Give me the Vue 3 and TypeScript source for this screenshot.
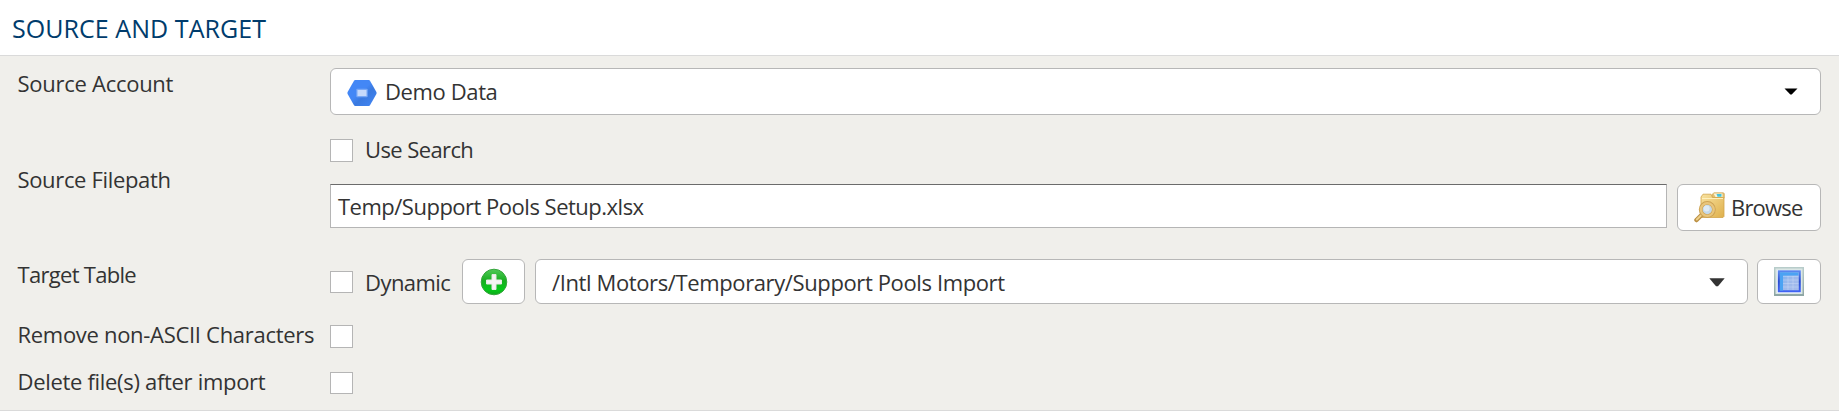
<script setup lang="ts">
import { ref } from 'vue'

const account = ref('Demo Data')
const filepath = ref('Temp/Support Pools Setup.xlsx')
const table = ref('/Intl Motors/Temporary/Support Pools Import')
const useSearch = ref(false)
const dynamic = ref(false)
const removeNonAscii = ref(false)
const deleteAfter = ref(false)
</script>

<template>
  <section class="panel">
    <header class="panel-header"><h2 class="title">SOURCE AND TARGET</h2></header>
    <div class="body">
      <div class="row row-account">
        <div class="label"><span class="t-account">Source Account</span></div>
        <div class="box select account">
          <svg class="hex" width="30" height="28" viewBox="0 0 30 28">
            <defs>
              <linearGradient id="hexShade" x1="0" y1="0" x2="1" y2="1">
                <stop offset="0.45" stop-color="#4387f6" /><stop offset="0.6" stop-color="#3a79df" /><stop offset="1" stop-color="#4387f6" />
              </linearGradient>
            </defs>
            <path d="M8.2 1h13.6q.8 0 1.2.7l6.4 11.4q.5.9 0 1.8L23 26.300q-.4.7-1.200.7H8.200q-.8 0-1.200-.7L.6 14.900q-.5-.9 0-1.800L7 1.700Q7.400 1 8.200 1z" fill="url(#hexShade)" />
            <rect x="9.300" y="9.700" width="11.400" height="8.600" rx="1" fill="#79a8f6" />
            <rect x="10.500" y="11" width="9" height="6" fill="#c6d9fb" />
          </svg>
          <span class="t-demo">{{ account }}</span>
          <svg class="arrow" width="14" height="8" viewBox="0 0 14 8"><path d="M.5.500h13L7.700 6.500H6.300z" fill="#000" /></svg>
        </div>
      </div>

      <div class="row row-file">
        <div class="label"><span class="t-filepath">Source Filepath</span></div>
        <div class="field">
          <div class="line search">
            <button class="check" role="checkbox" :aria-checked="useSearch" @click="useSearch = !useSearch"></button>
            <span class="t-search">Use Search</span>
          </div>
          <div class="line file">
            <div class="input"><span class="t-path">{{ filepath }}</span></div>
            <button class="box browse">
              <svg width="31" height="31" viewBox="0 0 31 31">
                <defs>
                  <linearGradient id="folder" x1="0" y1="0" x2="1" y2="1">
                    <stop offset="0" stop-color="#f8e2a0" /><stop offset="1" stop-color="#dfb04b" />
                  </linearGradient>
                </defs>
                <path d="M18 4V2.500L20 .8h9.500l.8 1V6H18z" fill="#e3c071" stroke="#cda553" stroke-width=".7" />
                <path d="M7 7.500V5L9 2.200h8L18.500 5.500H28l2 .5v18.500L29 25.500H7z" fill="url(#folder)" stroke="#d2a44b" stroke-width=".8" />
                <path d="M19.500 1.500h9v3.500h-7z" fill="#faf3d9" /><path d="M22.500 2h5v2.800h-4z" fill="#43c4df" />
                <path d="M8 6.500h21" stroke="#fff0be" stroke-width="1" />
                <path d="M8.500 22 2.500 28" stroke="#bb8f42" stroke-width="4.500" stroke-linecap="round" />
                <path d="M8.500 22 2.800 27.500" stroke="#edcf88" stroke-width="2" stroke-linecap="round" />
                <circle cx="13.300" cy="17.500" r="6.600" fill="#c4d9e9" stroke="#cda354" stroke-width="3.800" />
                <circle cx="13.300" cy="17.500" r="6.400" fill="none" stroke="#e9c67c" stroke-width="2.300" />
                <circle cx="12.600" cy="16.500" r="3" fill="#dfebf5" />
              </svg>
              <span class="t-browse">Browse</span>
            </button>
          </div>
        </div>
      </div>

      <div class="row row-table">
        <div class="label"><span class="t-target">Target Table</span></div>
        <div class="line target">
          <button class="check short" role="checkbox" :aria-checked="dynamic" @click="dynamic = !dynamic"></button>
          <span class="dynamic"><span class="t-dynamic">Dynamic</span></span>
          <button class="box add" aria-label="Add">
            <svg width="28" height="28" viewBox="0 0 28 28">
              <defs>
                <linearGradient id="green" x1="0" y1="0" x2="0" y2="1">
                  <stop offset="0" stop-color="#50c957" /><stop offset="0.45" stop-color="#17ae20" /><stop offset="0.8" stop-color="#06c919" /><stop offset="1" stop-color="#0da91a" />
                </linearGradient>
              </defs>
              <circle cx="14" cy="14" r="12.800" fill="url(#green)" stroke="#36a53d" stroke-width="1" />
              <path d="M12 6.500h4V12h5.500v4H16v5.500h-4V16H6.500v-4H12z" fill="#f4f4f2" stroke="#e6e9e4" stroke-width="1" />
            </svg>
          </button>
          <div class="box select table">
            <span class="t-table">{{ table }}</span>
            <svg class="arrow-table" width="16" height="9" viewBox="0 0 16 9"><path d="M.3.300h15.400L9 8.300H7z" fill="#333" /></svg>
          </div>
          <button class="box grid" aria-label="View table">
            <svg width="30" height="29" viewBox="0 0 30 29">
              <defs>
                <linearGradient id="frame" x1="0" y1="0" x2="0" y2="1"><stop offset="0" stop-color="#b9cdcb" /><stop offset="1" stop-color="#8da5a4" /></linearGradient>
                <linearGradient id="cells" x1="0" y1="0" x2="1" y2="1"><stop offset="0" stop-color="#6faef0" /><stop offset="0.5" stop-color="#9db9ec" /><stop offset="1" stop-color="#a6bceb" /></linearGradient>
                <linearGradient id="edge" x1="0" y1="0" x2="0" y2="1"><stop offset="0" stop-color="#5a86ef" /><stop offset="0.5" stop-color="#274ccf" /><stop offset="1" stop-color="#3e62f3" /></linearGradient>
              </defs>
              <rect width="30" height="29" fill="url(#frame)" />
              <rect x="1.500" y="1.500" width="27" height="25.500" fill="#dbe7e5" />
              <rect x="3" y="3" width="24" height="23" fill="#f6faff" />
              <rect x="4.800" y="4.300" width="21" height="20" fill="url(#cells)" stroke="url(#edge)" stroke-width="2" />
              <path d="M6 5.500h18.500v3H9v15H6z" fill="#4ba3f3" />
              <path d="M9 9.500h15.500M9 13h15.500M9 16.500h15.500M9 20h15.500M14 9v14M19 9v14" stroke="#d2e0fa" stroke-opacity=".5" stroke-width=".8" />
            </svg>
          </button>
        </div>
      </div>

      <div class="row row-ascii">
        <div class="label"><span class="t-ascii">Remove non-ASCII Characters</span></div>
        <button class="check" role="checkbox" :aria-checked="removeNonAscii" @click="removeNonAscii = !removeNonAscii"></button>
      </div>
      <div class="row row-delete">
        <div class="label"><span class="t-delete">Delete file(s) after import</span></div>
        <button class="check short" role="checkbox" :aria-checked="deleteAfter" @click="deleteAfter = !deleteAfter"></button>
      </div>
    </div>
  </section>
</template>

<style>
body { margin: 0; background: #fff; }
</style>

<style scoped>
* { box-sizing: border-box; }
.panel { height: 412px; font: 22px/30px "Open Sans", sans-serif; color: #333; white-space: nowrap; overflow: hidden; }
.panel-header { height: 55px; padding: 10px 0 0 12px; }
.title { margin: 0; font-size: 25px; line-height: 36px; font-weight: 400; color: #003c6c; letter-spacing: .06px; }
.body { height: 356px; background: #f0efeb; border-top: 1px solid #dadada; border-bottom: 1px solid #dadada; padding: 12px 18px 0 17px; }
.row { display: grid; grid-template-columns: 313px 1fr; align-items: start; }
.row-account { height: 66px; }
.row-file { height: 125px; }
.row-table { height: 60px; }
.row-ascii { height: 47px; }
.row-file .label { padding-top: 30px; }
.line { display: flex; align-items: center; }
.box { display: flex; align-items: center; background: #fff; border: 1px solid #b7b7b7; border-radius: 6px; padding: 0; font: inherit; color: inherit; }
.check { width: 23px; height: 23px; padding: 0; background: #fff; border: 1px solid #b5b5b5; border-radius: 0; flex: none; }
.short { height: 22px; }
.account { height: 47px; padding: 1px 22px 0 16px; }
.account .t-demo { margin-bottom: 2px; }
.hex { margin: 1px 8px 0 0; }
.arrow { margin: 0 0 0 auto; }
.search { gap: 12px; height: 28px; align-items: flex-start; }
.search .check { margin-top: 5px; }
.search .t-search { margin-top: 0; }
.file { align-items: flex-start; gap: 10px; margin-top: 22px; }
.input { flex: 1; height: 44px; background: #fff; border: 1px solid #b5b5b5; border-top-color: #6b6b6b; padding: 6px 7px; }
.browse { width: 144px; height: 47px; padding-left: 16px; gap: 6px; }
.browse .t-browse { margin-bottom: 2px; }
.target { height: 45px; }
.dynamic { width: 97px; margin: 1px 0 0 12px; }
.add { width: 63px; height: 45px; justify-content: center; }
.table { flex: 1; height: 45px; margin: 0 9px 0 10px; padding: 1px 22px 0 16px; }
.arrow-table { margin: 0 0 0 auto; }
.grid { width: 64px; height: 45px; justify-content: center; }
.row-ascii .check, .row-delete .check { margin-top: 6px; }
.label { padding-left: .5px; }
.t-account { letter-spacing: -.27px; }
.t-demo { letter-spacing: -.38px; }
.t-search { letter-spacing: -.6px; }
.t-filepath { letter-spacing: -.34px; }
.t-path { letter-spacing: -.5px; }
.t-browse { letter-spacing: -.8px; }
.t-target { letter-spacing: -.7px; }
.t-dynamic { letter-spacing: -.55px; }
.t-table { letter-spacing: -.38px; }
.t-ascii { letter-spacing: -.3px; }
.t-delete { letter-spacing: -.31px; }
</style>
